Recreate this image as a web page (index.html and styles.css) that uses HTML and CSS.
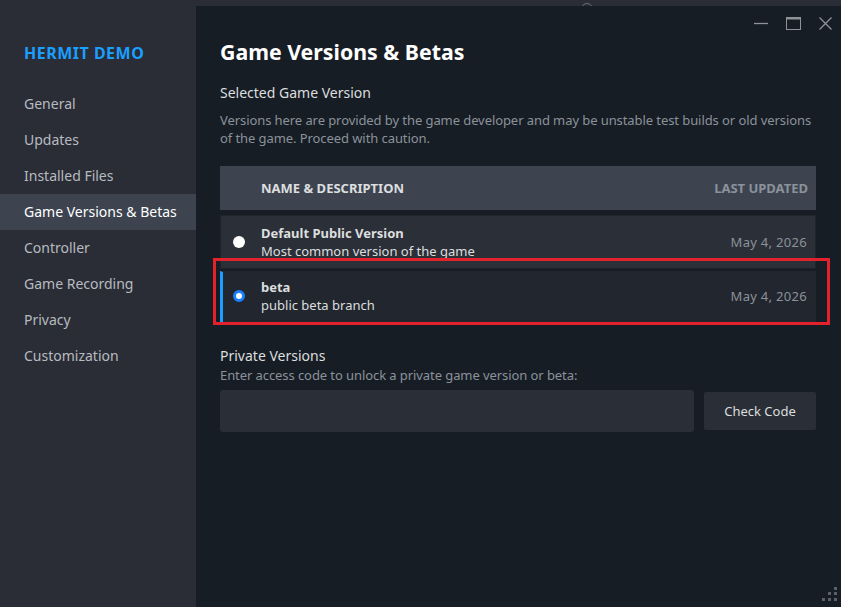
FILE: index.html
```html
<!doctype html>
<html>
<head>
    <meta charset="utf-8">
    <link rel="stylesheet" href="styles.css">
</head>
<body>

<div class="top-ring"></div>

<div class="app">
    <div class="sidebar">
        <div class="game-title">HERMIT DEMO</div>
        <div class="nav">
            <div class="nav-item">General</div>
            <div class="nav-item">Updates</div>
            <div class="nav-item">Installed Files</div>
            <div class="nav-item active">Game Versions &amp; Betas</div>
            <div class="nav-item">Controller</div>
            <div class="nav-item">Game Recording</div>
            <div class="nav-item">Privacy</div>
            <div class="nav-item">Customization</div>
        </div>
    </div>

    <div class="main">
        <div class="win-controls">
            <svg width="14" height="14" viewBox="0 0 14 14"><line x1="0" y1="7.5" x2="14" y2="7.5" stroke="#8e939a" stroke-width="1.3"/></svg>
            <svg width="15" height="13" viewBox="0 0 15 13"><rect x="0.5" y="0.5" width="14" height="12" fill="none" stroke="#8e939a" stroke-width="1"/><line x1="0" y1="1.5" x2="15" y2="1.5" stroke="#8e939a" stroke-width="2"/></svg>
            <svg width="13" height="13" viewBox="0 0 13 13"><path d="M0.5 0.5 L12.5 12.5 M12.5 0.5 L0.5 12.5" stroke="#8e939a" stroke-width="1.3"/></svg>
        </div>

        <h1 class="page-title">Game Versions &amp; Betas</h1>

        <div class="section-title">Selected Game Version</div>
        <p class="section-desc">Versions here are provided by the game developer and may be unstable test builds or old versions of the game. Proceed with caution.</p>

        <div class="table-head">
            <span class="col-name">NAME &amp; DESCRIPTION</span>
            <span class="col-date">LAST UPDATED</span>
        </div>

        <div class="rows">
            <div class="row">
                <span class="radio"></span>
                <div class="row-text">
                    <div class="row-name">Default Public Version</div>
                    <div class="row-desc">Most common version of the game</div>
                </div>
                <span class="row-date">May 4, 2026</span>
            </div>
            <div class="row selected">
                <span class="radio checked"></span>
                <div class="row-text">
                    <div class="row-name">beta</div>
                    <div class="row-desc">public beta branch</div>
                </div>
                <span class="row-date">May 4, 2026</span>
            </div>
            <div class="highlight"></div>
        </div>

        <div class="section-title private">Private Versions</div>
        <div class="section-desc tight">Enter access code to unlock a private game version or beta:</div>

        <div class="code-row">
            <input class="code-input" type="text">
            <button class="code-btn">Check Code</button>
        </div>

        <svg class="grip" width="15" height="15" viewBox="0 0 15 15">
            <rect x="12" y="0" width="3" height="3" fill="#5a5f68"/>
            <rect x="6" y="5" width="3" height="3" fill="#5a5f68"/>
            <rect x="12" y="5" width="3" height="3" fill="#5a5f68"/>
            <rect x="0" y="11" width="3" height="3" fill="#5a5f68"/>
            <rect x="6" y="11" width="3" height="3" fill="#5a5f68"/>
            <rect x="12" y="11" width="3" height="3" fill="#5a5f68"/>
        </svg>
    </div>
</div>

</body>
</html>
```

FILE: styles.css
```css
html,
body {
    width: 100%;
    height: 100%;
    padding: 0;
    margin: 0;
    overflow: hidden;
}

body {
    background: #2a2d35;
    font-family: "Noto Sans", "Open Sans", sans-serif;
    color: #dcdedf;
}

.top-ring {
    position: absolute;
    left: 581px;
    top: 3px;
    width: 10px;
    height: 10px;
    border: 1px solid #6a6f78;
    border-radius: 50%;
}

.app {
    display: flex;
    height: 100%;
}

.sidebar {
    width: 196px;
    flex-shrink: 0;
    padding-top: 43px;
}

.game-title {
    padding-left: 24px;
    font-size: 16px;
    line-height: 20px;
    font-weight: bold;
    letter-spacing: 0.5px;
    color: #1a9fff;
    margin-bottom: 23px;
}

.nav-item {
    height: 36px;
    line-height: 36px;
    padding-left: 24px;
    font-size: 14px;
    color: #b7bbc0;
}

.nav-item.active {
    background: #3d4450;
    color: #ffffff;
}

.main {
    position: relative;
    flex: 1;
    margin-top: 6px;
    background: #171d25;
    padding: 32px 25px 0 24px;
}

.win-controls {
    position: absolute;
    top: 10px;
    right: 9px;
    display: flex;
    align-items: center;
    gap: 18px;
}

.page-title {
    margin: 0;
    font-size: 21.3px;
    line-height: 28px;
    font-weight: bold;
    color: #ffffff;
}

.section-title {
    margin-top: 17px;
    font-size: 14px;
    line-height: 20px;
    color: #dcdedf;
}

.section-desc {
    margin: 8px 0 0;
    font-size: 13px;
    line-height: 18px;
    letter-spacing: -0.08px;
    color: #8b929a;
}

.table-head {
    display: flex;
    justify-content: space-between;
    align-items: center;
    height: 44px;
    margin-top: 19px;
    padding: 0 8px 0 41px;
    background: #3d4450;
    font-size: 13px;
    font-weight: bold;
}

.col-name {
    color: #dcdedf;
}

.col-date {
    color: #8b929a;
}

.rows {
    position: relative;
    margin-top: 5px;
    display: flex;
    flex-direction: column;
    gap: 2px;
}

.row {
    display: flex;
    align-items: center;
    padding: 8px 8px 8px 0;
    border: 1px solid #1f232b;
    background: #2b2f38;
}

.row.selected {
    padding: 6px 8px 9px 0;
    background: #22262e;
    border-color: transparent;
    border-left: 3px solid #1a9fff;
}

.radio {
    width: 12px;
    height: 12px;
    margin: 0 16px 0 12px;
    border-radius: 50%;
    background: #ffffff;
    box-sizing: border-box;
}

.row.selected .radio {
    margin-left: 10px;
}

.radio.checked {
    background: #ffffff;
    border: 3px solid #1a7fff;
}

.row-text {
    flex: 1;
}

.row-name {
    font-size: 13px;
    line-height: 18px;
    font-weight: bold;
    color: #dcdedf;
}

.row-desc {
    font-size: 13px;
    line-height: 18px;
    color: #dcdedf;
}

.row-date {
    font-size: 13px;
    letter-spacing: 0.3px;
    color: #8b929a;
}

.highlight {
    position: absolute;
    left: -7px;
    top: 43px;
    width: 611px;
    height: 61px;
    border: 3px solid #e3222b;
}

.section-title.private {
    margin-top: 22px;
}

.section-desc.tight {
    margin-top: 0;
}

.code-row {
    display: flex;
    align-items: center;
    gap: 10px;
    margin-top: 6px;
}

.code-input {
    flex: 1;
    height: 42px;
    box-sizing: border-box;
    border: none;
    border-radius: 3px;
    background: #2a2e37;
    outline: none;
}

.code-btn {
    width: 112px;
    height: 38px;
    border: none;
    border-radius: 2px;
    background: #2a2e37;
    color: #dcdedf;
    font-family: "Noto Sans", "Open Sans", sans-serif;
    font-size: 13px;
}

.grip {
    position: absolute;
    right: 4px;
    bottom: 5px;
}
```
